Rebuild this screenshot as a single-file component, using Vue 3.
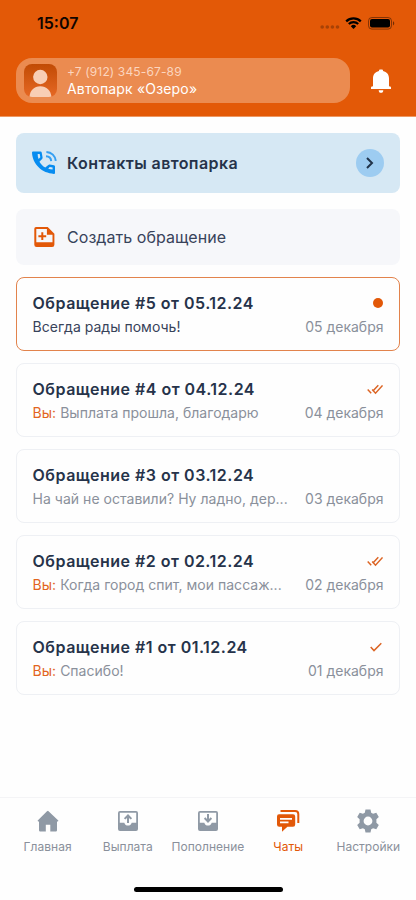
<script setup>
const chats = [
  { id: 5, date: '05.12.24', text: 'Всегда рады помочь!', day: '05 декабря', state: 'unread' },
  { id: 4, date: '04.12.24', own: true, text: 'Выплата прошла, благодарю', day: '04 декабря', state: 'read' },
  { id: 3, date: '03.12.24', text: 'На чай не оставили? Ну ладно, дер...', day: '03 декабря', state: 'none' },
  { id: 2, date: '02.12.24', own: true, text: 'Когда город спит, мои пассаж...', day: '02 декабря', state: 'read' },
  { id: 1, date: '01.12.24', own: true, text: 'Спасибо!', day: '01 декабря', state: 'sent' },
]
const tabs = [
  { name: 'home', label: 'Главная' },
  { name: 'payout', label: 'Выплата' },
  { name: 'topup', label: 'Пополнение' },
  { name: 'chats', label: 'Чаты', active: true },
  { name: 'settings', label: 'Настройки' },
]
</script>

<template>
  <div class="screen">
    <header class="header">
      <div class="status">
        <span class="time">15:07</span>
        <svg class="dots" width="20" height="4" viewBox="0 0 20 4"><circle cx="2.2" cy="2" r="1.8" /><circle cx="7.3" cy="2" r="1.8" /><circle cx="12.4" cy="2" r="1.8" /><circle cx="17.5" cy="2" r="1.8" /></svg>
        <svg class="wifi" width="17" height="12" viewBox="0 0 17 12">
          <path d="M1.2 4.4a10.4 10.4 0 0 1 14.6 0M3.8 7a6.7 6.7 0 0 1 9.4 0" fill="none" stroke="#000" stroke-width="2.2" />
          <path d="M8.5 11.9 5.8 9.2a3.8 3.8 0 0 1 5.4 0Z" />
        </svg>
        <svg class="battery" width="27" height="13" viewBox="0 0 27 13">
          <rect x=".5" y=".5" width="23" height="11.6" rx="3.4" fill="none" stroke="#000" stroke-opacity=".42" />
          <rect x="2" y="2" width="20" height="8.6" rx="2" />
          <path d="M25 4.2v4.2c1.7-.7 1.7-3.5 0-4.2Z" opacity=".5" />
        </svg>
      </div>
      <div class="account-row">
        <div class="account">
          <svg class="avatar" width="33" height="33" viewBox="0 0 33 33">
            <defs>
              <linearGradient id="avatar-bg" x1="0" y1="0" x2="0" y2="1"><stop offset="0" stop-color="#c14b05" /><stop offset="1" stop-color="#e66824" /></linearGradient>
              <clipPath id="avatar-clip"><rect width="33" height="33" rx="8" /></clipPath>
            </defs>
            <g clip-path="url(#avatar-clip)">
              <rect width="33" height="33" fill="url(#avatar-bg)" />
              <circle cx="16.3" cy="13" r="7.2" fill="#f8ceb5" />
              <path d="M5.5 33c.3-6.7 4.6-10.8 10.8-10.8S27 26.3 27.4 33Z" fill="#f8ceb5" />
            </g>
          </svg>
          <div class="who">
            <div class="phone">+7 (912) 345-67-89</div>
            <div class="park">Автопарк «Озеро»</div>
          </div>
        </div>
        <svg class="bell" width="20" height="24" viewBox="0 0 20 24"><path d="M8 2V1.500Q8 .5 9 .5h2q1 0 1 1V2c3.800.9 6 3.500 6 7.500v7.700l1 .3q1 .2 1 1V20H0v-1.500q0-.8 1-1l1-.3V9.500C2 5.500 4.200 2.900 8 2ZM7.700 21.200h4.600c0 1.600-.8 2.600-2.300 2.600s-2.300-1-2.300-2.600Z" /></svg>
      </div>
    </header>

    <main class="content">
      <div class="contacts">
        <svg class="lead-icon call" width="26" height="26" viewBox="0 0 26 26">
          <path fill-rule="evenodd" fill="#078cf0" d="M2 1.500H9.500q1 0 1.200 1l.9 5q.1.800-.5 1.400L8.400 11.700c1.600 2.600 3.300 4.300 5.900 5.900l3-2.700q.6-.6 1.400-.4l4.300.8q1 .2 1 1.200v6.400q0 1-1 1C11 23.300 1.500 14.400 1 2.600q0-1.100 1-1.100ZM7.600 8.900l1.700-1.700-.6-3.300H6.700c-.1 1.700.2 3.400.9 5ZM17.200 18.700c1.400.4 2.900.7 4.400.8v-2l-2.900-.5Z" />
          <path d="M15.400 1.900c5 .2 9 4.100 9.400 9M15 6.200c2.900.1 5 2 5.200 4.900" fill="none" stroke="#36a0f2" stroke-width="2" />
        </svg>
        <span>Контакты автопарка</span>
        <div class="go"><svg width="10" height="14" viewBox="0 0 10 14"><path d="m2 2 5 5-5 5" /></svg></div>
      </div>
      <div class="create">
        <svg class="lead-icon" width="26" height="26" viewBox="0 0 26 26">
          <path fill="#e25808" fill-rule="evenodd" d="M4 3h11.700L22.400 9.700v11q0 2.300-2.300 2.300H4.600Q2.300 23 2.300 20.700V4.700Q2.300 3 4 3ZM4.300 5v13.300h16.200v-7.600h-5.600V5Z" />
          <path d="M10.300 8.300v7.800M6.400 12.200h7.800" stroke="#e25808" stroke-width="2" />
        </svg>
        <span>Создать обращение</span>
      </div>
      <div class="list">
        <article v-for="c in chats" :key="c.id" class="chat" :class="{ unread: c.state === 'unread' }">
          <div class="row">
            <h3 class="title">Обращение #{{ c.id }} от {{ c.date }}</h3>
            <span v-if="c.state === 'unread'" class="dot"></span>
            <svg v-else-if="c.state === 'read'" class="check" width="16" height="11" viewBox="0 0 16 11"><path d="m.7 5.500 3.500 3.700m1-3.700 3.300 3.700 7-7.800M5.700 7.200l5.600-6" /></svg>
            <svg v-else-if="c.state === 'sent'" class="check single" width="12" height="10" viewBox="0 0 12 10"><path d="m.7 5 3.300 3.600 7.300-7.400" /></svg>
          </div>
          <div class="row">
            <p class="message"><span v-if="c.own" class="own">Вы: </span>{{ c.text }}</p>
            <span class="day">{{ c.day }}</span>
          </div>
        </article>
      </div>
    </main>

    <footer class="footer">
      <nav class="tabs">
        <div v-for="t in tabs" :key="t.name" class="tab" :class="{ active: t.active }">
          <svg width="26" height="26" viewBox="0 0 26 26">
            <path v-if="t.name === 'home'" d="m13 2.700 10.300 9.800q.3.800-.5.900H22v8.900q0 1.200-1.200 1.200h-5.500v-6.800h-4.500v6.800H5.200Q4 23.500 4 22.300v-8.900h-.8q-.8-.1-.5-.9L12 3.300q.5-.6 1-.6Z" />
            <g v-else-if="t.name === 'payout' || t.name === 'topup'">
              <path fill-rule="evenodd" d="M5 3h16q2 0 2 2v16q0 2-2 2H5q-2 0-2-2V5q0-2 2-2Zm-.2 1.800v10h4.500c.6 2 2 2.800 3.700 2.800s3.100-.8 3.700-2.800h4.500v-10Z" />
              <path v-if="t.name === 'payout'" d="M12 14.900V9.900l-1.700 1.700-1.400-1.400L13 6l4.100 4.200-1.400 1.400L14 9.900v5Z" />
              <path v-else d="M12 6v5L10.300 9.300l-1.400 1.400 4.100 4.200 4.100-4.200-1.400-1.400L14 11V6Z" />
            </g>
            <g v-else-if="t.name === 'chats'">
              <path d="M4 6.200h14q2.200 0 2.200 2.200v8.200q0 2.200-2.200 2.200h-5.600L7 23.800v-5H4.200Q2 18.800 2 16.600V8.400Q2 6.200 4 6.200Z" />
              <path d="M5.500 3.100h14.700q3.100 0 3.100 3v8.800" fill="none" stroke="currentColor" stroke-width="2" />
              <path d="M5 10.800h12M5 14.400h8.500" stroke="#fff" stroke-width="1.700" />
            </g>
            <path v-else fill-rule="evenodd" d="M10.500 1.500h5l.7 3.200 1.900 1.100 3.200-1 2.500 4.300-2.400 2.200v3.400l2.400 2.200-2.500 4.300-3.200-1-1.900 1.100-.7 3.200h-5l-.7-3.200-1.900-1.100-3.200 1-2.500-4.300 2.400-2.200v-3.400L2.200 9.100l2.500-4.300 3.200 1 1.900-1.100ZM13 8.600a4.400 4.400 0 1 0 0 8.800 4.400 4.400 0 0 0 0-8.800Z" />
          </svg>
          <span>{{ t.label }}</span>
        </div>
      </nav>
      <div class="home-bar"></div>
    </footer>
  </div>
</template>

<style>
body { margin: 0; background: #fefefe; }
</style>

<style scoped>
* { box-sizing: border-box; }
svg { display: block; flex: none; }
.screen { display: flex; flex-direction: column; width: 416px; height: 900px; background: #fefefe; color: #26334a; font-family: Inter, Roboto, sans-serif; overflow: hidden; }
.header { flex: none; height: 117px; background: #e35907; border-bottom: 1px solid #ed9863; }
.status { display: flex; align-items: center; height: 46px; padding: 0 21px 0 37px; }
.time { margin-right: auto; font-size: 16px; font-weight: 600; line-height: 20px; color: #100500; }
.dots { fill: #a74206; margin: 8px 5px 0 0; }
.wifi { margin-right: 6px; }
.account-row { display: flex; align-items: center; padding: 12px 25px 0 16px; }
.account { display: flex; align-items: center; width: 333.5px; height: 45px; padding-left: 8px; border-radius: 16px; background: #eb8b50; }
.who { margin-left: 10px; }
.phone { font-size: 12px; line-height: 17px; letter-spacing: .14px; color: #fbd5bf; }
.park { font-size: 14px; line-height: 18px; letter-spacing: .17px; color: #fff; }
.bell { margin-left: auto; fill: #fff; }
.content { flex: 1; padding: 16px 16.5px 0 16px; }
.contacts, .create { display: flex; align-items: center; padding: 0 16px; border-radius: 8px; font-size: 16px; line-height: 24px; }
.contacts { height: 60px; background: #d6e8f4; font-weight: 600; letter-spacing: .41px; }
.create { height: 56px; margin-top: 16px; background: #f6f7fa; color: #38435a; letter-spacing: .05px; }
.lead-icon { margin-right: 9px; }
.call { margin-right: 10px; margin-left: -1px; }
.go { display: flex; align-items: center; justify-content: center; width: 28px; height: 28px; margin-left: auto; border-radius: 50%; background: #9dccf1; }
.go path { fill: none; stroke: #20334a; stroke-width: 2; }
.list { display: grid; gap: 12px; margin-top: 12px; }
.chat { height: 74px; padding: 13px 15px 0 15.6px; border: 1px solid #eef0f4; border-radius: 8px; }
.unread { border-color: #e2834c; }
.row { display: flex; align-items: center; height: 24px; }
.title { margin: 0 auto 0 0; font-size: 16px; font-weight: 600; line-height: 24px; letter-spacing: .48px; }
.message { margin: 0 auto 0 0; font-size: 14px; line-height: 24px; letter-spacing: .02px; color: #8a909b; white-space: nowrap; }
.unread .message { color: #38435a; }
.own { color: #e2651e; }
.day { font-size: 14px; line-height: 24px; color: #8a909b; white-space: nowrap; }
.dot { width: 10px; height: 10px; margin-right: .5px; border-radius: 50%; background: #e25808; }
.check { margin-right: .5px; fill: none; stroke: #dc6525; stroke-width: 1.5; }
.single { margin-right: 2px; }
.footer { flex: none; height: 103px; border-top: 1px solid #f4f4f6; }
.tabs { display: grid; grid-template-columns: repeat(5, 80.2px); padding: 10px 0 0 7.5px; }
.tab { display: flex; flex-direction: column; align-items: center; color: #8f99a5; fill: currentColor; }
.tab span { margin-top: 3.5px; font-size: 12px; line-height: 17px; letter-spacing: .03px; color: #8a909b; }
.tab.active, .tab.active span { color: #e25808; }
.home-bar { width: 149px; height: 5px; margin: 32px auto 0; border-radius: 3px; background: #000; }
</style>
